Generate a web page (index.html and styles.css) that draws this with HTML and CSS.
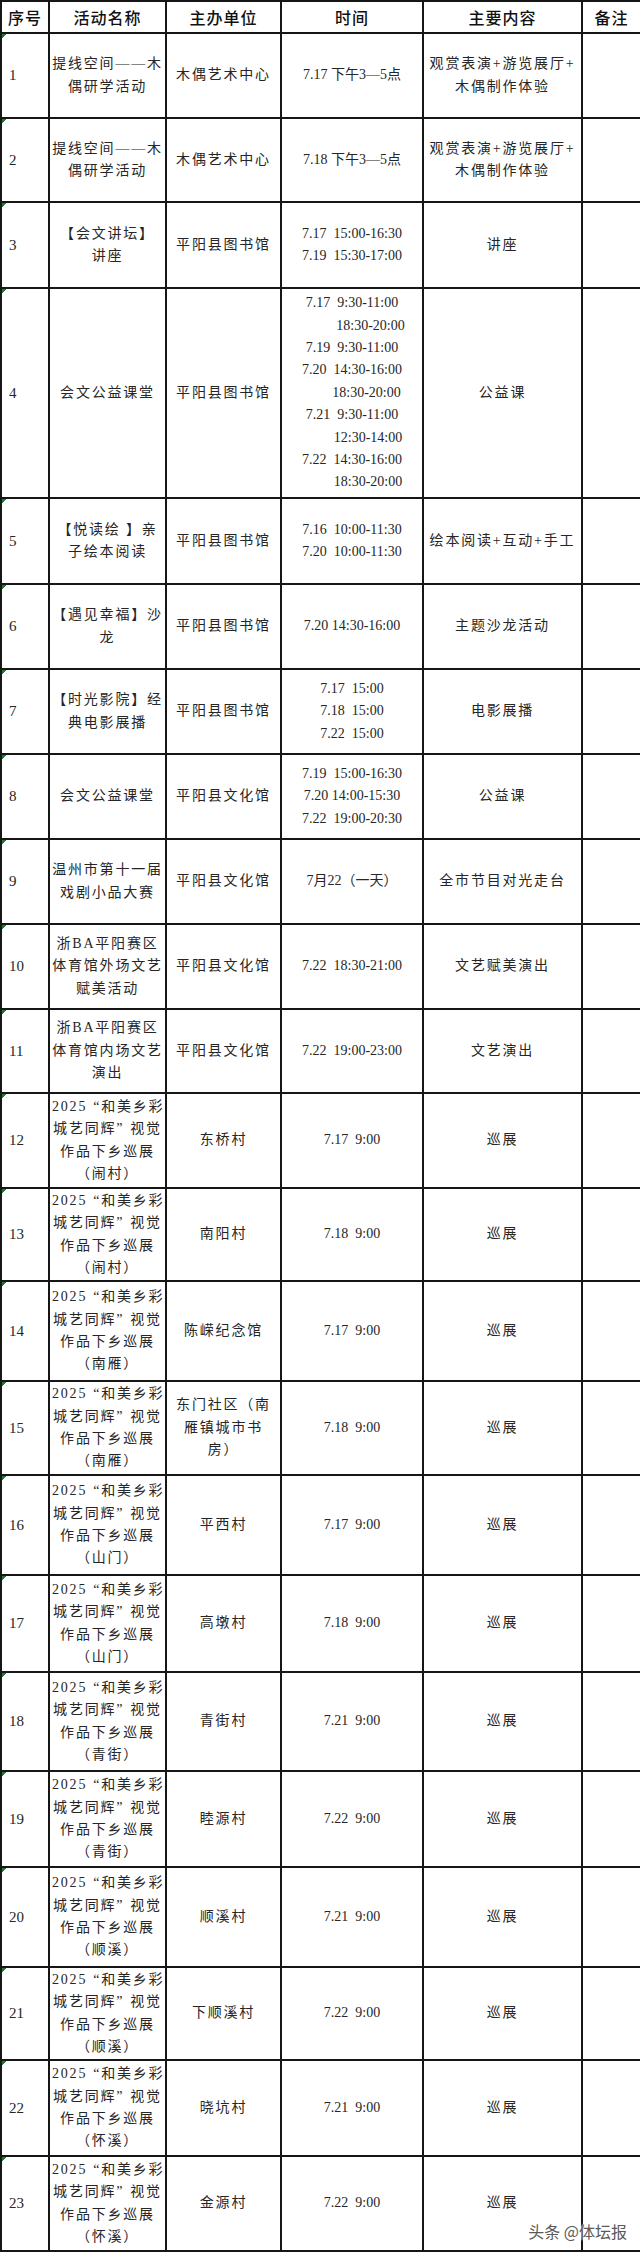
FILE: index.html
```html
<!DOCTYPE html>
<html lang="zh-CN">
<head>
<meta charset="utf-8">
<title>活动安排表</title>
<link rel="stylesheet" href="styles.css">
</head>
<body>
<div class="page">
<table class="sched">
<colgroup>
<col class="c1"><col class="c2"><col class="c3"><col class="c4"><col class="c5"><col class="c6">
</colgroup>
<thead>
<tr class="head"><th>序号</th><th>活动名称</th><th>主办单位</th><th>时间</th><th>主要内容</th><th>备注</th></tr>
</thead>
<tbody>
<tr class="h85"><td class="num">1</td><td>提线空间——木<br>偶研学活动</td><td>木偶艺术中心</td><td class="time"><div class="t">7.17 下午3—5点</div></td><td>观赏表演+游览展厅+<br>木偶制作体验</td><td></td></tr>
<tr class="h84"><td class="num">2</td><td>提线空间——木<br>偶研学活动</td><td>木偶艺术中心</td><td class="time"><div class="t">7.18 下午3—5点</div></td><td>观赏表演+游览展厅+<br>木偶制作体验</td><td></td></tr>
<tr class="h86"><td class="num">3</td><td>【会文讲坛】<br>讲座</td><td>平阳县图书馆</td><td class="time"><div class="t">7.17  15:00-16:30</div><div class="t">7.19  15:30-17:00</div></td><td>讲座</td><td></td></tr>
<tr class="h210"><td class="num">4</td><td>会文公益课堂</td><td>平阳县图书馆</td><td class="time"><div class="t">7.17  9:30-11:00</div><div class="t i37">18:30-20:00</div><div class="t">7.19  9:30-11:00</div><div class="t">7.20  14:30-16:00</div><div class="t i29">18:30-20:00</div><div class="t">7.21  9:30-11:00</div><div class="t i32">12:30-14:00</div><div class="t">7.22  14:30-16:00</div><div class="t i32">18:30-20:00</div></td><td>公益课</td><td></td></tr>
<tr class="h86"><td class="num">5</td><td>【悦读绘 】亲<br>子绘本阅读</td><td>平阳县图书馆</td><td class="time"><div class="t">7.16  10:00-11:30</div><div class="t">7.20  10:00-11:30</div></td><td>绘本阅读+互动+手工</td><td></td></tr>
<tr class="h85"><td class="num">6</td><td>【遇见幸福】沙<br>龙</td><td>平阳县图书馆</td><td class="time"><div class="t">7.20 14:30-16:00</div></td><td>主题沙龙活动</td><td></td></tr>
<tr class="h85"><td class="num">7</td><td>【时光影院】经<br>典电影展播</td><td>平阳县图书馆</td><td class="time"><div class="t">7.17  15:00</div><div class="t">7.18  15:00</div><div class="t">7.22  15:00</div></td><td>电影展播</td><td></td></tr>
<tr class="h85"><td class="num">8</td><td>会文公益课堂</td><td>平阳县文化馆</td><td class="time"><div class="t">7.19  15:00-16:30</div><div class="t">7.20 14:00-15:30</div><div class="t">7.22  19:00-20:30</div></td><td>公益课</td><td></td></tr>
<tr class="h85"><td class="num">9</td><td>温州市第十一届<br>戏剧小品大赛</td><td>平阳县文化馆</td><td class="time"><div class="t">7月22（一天）</div></td><td>全市节目对光走台</td><td></td></tr>
<tr class="h85"><td class="num">10</td><td>浙BA平阳赛区<br>体育馆外场文艺<br>赋美活动</td><td>平阳县文化馆</td><td class="time"><div class="t">7.22  18:30-21:00</div></td><td>文艺赋美演出</td><td></td></tr>
<tr class="h84"><td class="num">11</td><td>浙BA平阳赛区<br>体育馆内场文艺<br>演出</td><td>平阳县文化馆</td><td class="time"><div class="t">7.22  19:00-23:00</div></td><td>文艺演出</td><td></td></tr>
<tr class="h95"><td class="num">12</td><td>2025<span class="ql">“</span>和美乡彩<br>城艺同辉<span class="qr">”</span>视觉<br>作品下乡巡展<br>（闹村）</td><td>东桥村</td><td class="time"><div class="t">7.17  9:00</div></td><td>巡展</td><td></td></tr>
<tr class="h93"><td class="num">13</td><td>2025<span class="ql">“</span>和美乡彩<br>城艺同辉<span class="qr">”</span>视觉<br>作品下乡巡展<br>（闹村）</td><td>南阳村</td><td class="time"><div class="t">7.18  9:00</div></td><td>巡展</td><td></td></tr>
<tr class="h100"><td class="num">14</td><td>2025<span class="ql">“</span>和美乡彩<br>城艺同辉<span class="qr">”</span>视觉<br>作品下乡巡展<br>（南雁）</td><td>陈嵘纪念馆</td><td class="time"><div class="t">7.17  9:00</div></td><td>巡展</td><td></td></tr>
<tr class="h94"><td class="num">15</td><td>2025<span class="ql">“</span>和美乡彩<br>城艺同辉<span class="qr">”</span>视觉<br>作品下乡巡展<br>（南雁）</td><td>东门社区（南<br>雁镇城市书<br>房）</td><td class="time"><div class="t">7.18  9:00</div></td><td>巡展</td><td></td></tr>
<tr class="h100"><td class="num">16</td><td>2025<span class="ql">“</span>和美乡彩<br>城艺同辉<span class="qr">”</span>视觉<br>作品下乡巡展<br>（山门）</td><td>平西村</td><td class="time"><div class="t">7.17  9:00</div></td><td>巡展</td><td></td></tr>
<tr class="h97"><td class="num">17</td><td>2025<span class="ql">“</span>和美乡彩<br>城艺同辉<span class="qr">”</span>视觉<br>作品下乡巡展<br>（山门）</td><td>高墩村</td><td class="time"><div class="t">7.18  9:00</div></td><td>巡展</td><td></td></tr>
<tr class="h99"><td class="num">18</td><td>2025<span class="ql">“</span>和美乡彩<br>城艺同辉<span class="qr">”</span>视觉<br>作品下乡巡展<br>（青街）</td><td>青街村</td><td class="time"><div class="t">7.21  9:00</div></td><td>巡展</td><td></td></tr>
<tr class="h96"><td class="num">19</td><td>2025<span class="ql">“</span>和美乡彩<br>城艺同辉<span class="qr">”</span>视觉<br>作品下乡巡展<br>（青街）</td><td>睦源村</td><td class="time"><div class="t">7.22  9:00</div></td><td>巡展</td><td></td></tr>
<tr class="h100"><td class="num">20</td><td>2025<span class="ql">“</span>和美乡彩<br>城艺同辉<span class="qr">”</span>视觉<br>作品下乡巡展<br>（顺溪）</td><td>顺溪村</td><td class="time"><div class="t">7.21  9:00</div></td><td>巡展</td><td></td></tr>
<tr class="h93"><td class="num">21</td><td>2025<span class="ql">“</span>和美乡彩<br>城艺同辉<span class="qr">”</span>视觉<br>作品下乡巡展<br>（顺溪）</td><td>下顺溪村</td><td class="time"><div class="t">7.22  9:00</div></td><td>巡展</td><td></td></tr>
<tr class="h96"><td class="num">22</td><td>2025<span class="ql">“</span>和美乡彩<br>城艺同辉<span class="qr">”</span>视觉<br>作品下乡巡展<br>（怀溪）</td><td>晓坑村</td><td class="time"><div class="t">7.21  9:00</div></td><td>巡展</td><td></td></tr>
<tr class="h95"><td class="num">23</td><td>2025<span class="ql">“</span>和美乡彩<br>城艺同辉<span class="qr">”</span>视觉<br>作品下乡巡展<br>（怀溪）</td><td>金源村</td><td class="time"><div class="t">7.22  9:00</div></td><td>巡展</td><td></td></tr>
</tbody>
</table>
<div class="wm">头条 @体坛报</div>
</div>
</body>
</html>
```

FILE: styles.css
```css
html, body {
  margin: 0;
  padding: 0;
  background: #ffffff;
}

.page {
  position: relative;
  width: 640px;
}

.sched {
  width: 640px;
  border-collapse: collapse;
  table-layout: fixed;
  font-family: "Liberation Serif", "Noto Sans CJK SC", serif;
  color: #262626;
}

.c1 { width: 48px; }
.c2 { width: 117px; }
.c3 { width: 115px; }
.c4 { width: 142px; }
.c5 { width: 159px; }
.c6 { width: 59px; }

.sched th,
.sched td {
  border: 2px solid #161616;
  padding: 0 2px;
  text-align: center;
  vertical-align: middle;
  font-size: 14px;
  line-height: 22.4px;
  letter-spacing: 1.8px;
  white-space: nowrap;
  overflow: hidden;
}

.sched th {
  font-family: "Noto Sans CJK SC", sans-serif;
  font-weight: 500;
  font-size: 16px;
  letter-spacing: 1px;
  color: #111111;
}

.head { height: 32px; }

.sched td.num {
  text-align: left;
  padding-left: 7px;
  font-size: 15px;
  letter-spacing: 0;
  background: linear-gradient(135deg, #1f7a35 0, #1f7a35 3px, transparent 3px);
}

.sched td.time {
  letter-spacing: 0;
}

.ql,
.qr {
  display: inline-block;
  width: 14px;
}

.ql { text-align: right; }
.qr { text-align: left; }

.t { white-space: pre; }
.i29 { padding-left: 29px; }
.i32 { padding-left: 32px; }
.i37 { padding-left: 37px; }

.h84 { height: 84px; }
.h85 { height: 85px; }
.h86 { height: 86px; }
.h93 { height: 93px; }
.h94 { height: 94px; }
.h95 { height: 95px; }
.h96 { height: 96px; }
.h97 { height: 97px; }
.h99 { height: 99px; }
.h100 { height: 100px; }
.h210 { height: 210px; }

.wm {
  position: absolute;
  right: 13px;
  bottom: 12px;
  font-family: "Noto Sans CJK SC", sans-serif;
  font-size: 16px;
  line-height: 18px;
  color: #5a5a5a;
  text-shadow: 0 0 2px #ffffff, 0 0 2px #ffffff;
}
```
